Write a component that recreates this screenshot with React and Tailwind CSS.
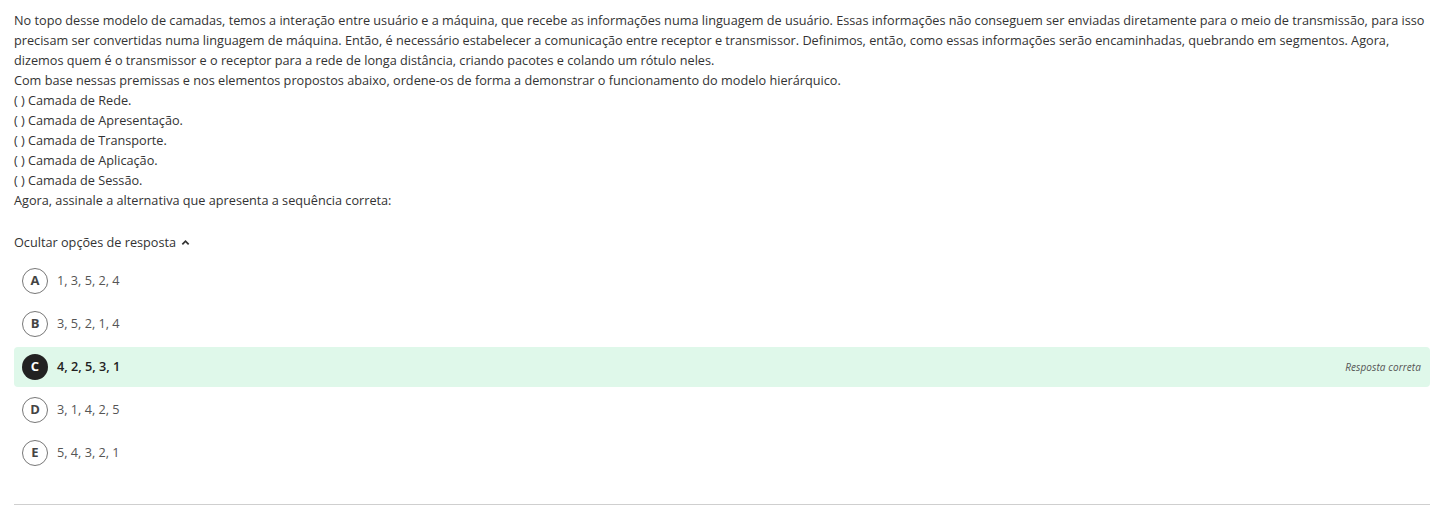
import React from "react";

const LINES = [
  "( ) Camada de Rede.",
  "( ) Camada de Apresentação.",
  "( ) Camada de Transporte.",
  "( ) Camada de Aplicação.",
  "( ) Camada de Sessão.",
];

const OPTIONS = [
  { letter: "A", text: "1, 3, 5, 2, 4" },
  { letter: "B", text: "3, 5, 2, 1, 4" },
  { letter: "C", text: "4, 2, 5, 3, 1", correct: true },
  { letter: "D", text: "3, 1, 4, 2, 5" },
  { letter: "E", text: "5, 4, 3, 2, 1" },
];

function Option({ letter, text, correct }) {
  return (
    <div className={`h-10 flex items-center pl-2 pr-[9px] rounded-sm ${correct ? "bg-[#dff8ea]" : ""}`}>
      <span
        className={`w-[26px] h-[26px] rounded-full flex items-center justify-center text-[13px] font-bold ${
          correct ? "bg-[#222] text-white" : "border border-[#777] text-[#444]"
        }`}
      >
        {letter}
      </span>
      <span className={`ml-[9px] text-[12.7px] flex-1 ${correct ? "text-[#222] font-semibold" : "text-[#555]"}`}>{text}</span>
      {correct && <span className="text-[10px] italic text-[#555] tracking-[0.1px]">Resposta correta</span>}
    </div>
  );
}

export default function App() {
  return (
    <div className="w-[1442px] h-[514px] bg-white pl-[14px] pr-[12px] pt-[10px] text-[#333]" style={{ fontFamily: '"Open Sans", sans-serif' }}>
      <div className="w-[1412px] text-[12.7px] leading-5">
        <p>
          No topo desse modelo de camadas, temos a interação entre usuário e a máquina, que recebe as informações numa linguagem de usuário. Essas informações não conseguem ser enviadas diretamente para o meio de transmissão, para isso precisam ser convertidas numa linguagem de máquina. Então, é necessário estabelecer a comunicação entre receptor e transmissor. Definimos, então, como essas informações serão encaminhadas, quebrando em segmentos. Agora, dizemos quem é o transmissor e o receptor para a rede de longa distância, criando pacotes e colando um rótulo neles.
        </p>
        <p>Com base nessas premissas e nos elementos propostos abaixo, ordene-os de forma a demonstrar o funcionamento do modelo hierárquico.</p>
        {LINES.map(l => <p key={l}>{l}</p>)}
        <p>Agora, assinale a alternativa que apresenta a sequência correta:</p>
      </div>

      <div className="mt-[22px] flex items-center gap-[5px] text-[12.7px] leading-5 text-[#333]">
        <span>Ocultar opções de resposta</span>
        <svg width="9" height="9" viewBox="0 0 10 10" className="mt-[1px]">
          <path d="M1.5 7 L5 3.5 L8.5 7" fill="none" stroke="#333" strokeWidth="2" />
        </svg>
      </div>

      <div className="mt-[9px] flex flex-col gap-[3px]">
        {OPTIONS.map(o => <Option key={o.letter} {...o} />)}
      </div>

      <div className="mt-[31px] h-px bg-[#cfcfcf]" />
    </div>
  );
}
